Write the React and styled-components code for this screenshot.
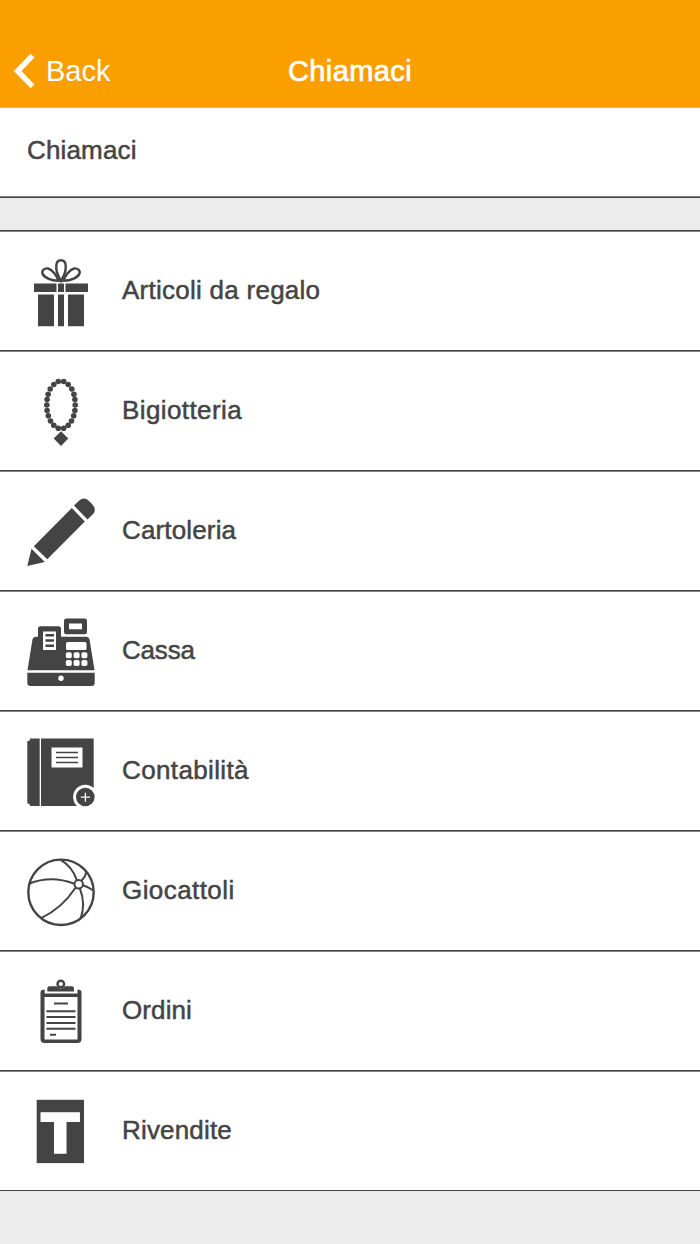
import React from 'react';
import styled, { createGlobalStyle } from 'styled-components';

const ink = '#444444';

const GlobalStyle = createGlobalStyle`
  * {
    box-sizing: border-box;
  }

  body {
    margin: 0;
    background-color: #ececec;
    font-family: "Liberation Sans", Arial, sans-serif;
    color: ${ink};
  }
`;

const Screen = styled.div`
  min-height: 1244px;
  background-color: #ececec;
`;

const NavBar = styled.header`
  display: grid;
  grid-template-columns: 1fr auto 1fr;
  align-items: center;
  height: 108px;
  padding: 35px 13px 0;
  background-color: #fb9e00;
  border-bottom: 1px solid #c3bba9;
  color: #ffffff;
`;

const BackButton = styled.button`
  display: flex;
  align-items: center;
  gap: 11px;
  padding: 0;
  background: none;
  border: none;
  color: inherit;
  font-family: inherit;
  font-size: 29px;
  line-height: 36px;
  cursor: pointer;
`;

const Title = styled.h1`
  margin: 0;
  font-size: 29px;
  font-weight: 400;
  line-height: 36px;
  letter-spacing: 0.4px;
  -webkit-text-stroke: 0.7px currentColor;
`;

const SectionHeader = styled.div`
  height: 90px;
  padding: 25px 27px;
  background-color: #ffffff;
  border-bottom: 1px solid ${ink};
  box-shadow: inset 0 -1px #858585;
`;

const Label = styled.span`
  margin-bottom: 2px;
  font-size: 26px;
  line-height: 34px;
  letter-spacing: ${props => props.$spacing || 0}px;
  -webkit-text-stroke: 0.5px currentColor;
`;

const List = styled.ul`
  margin: 32px 0 0;
  padding: 0;
  list-style: none;
  background-color: #ffffff;
  border-top: 1px solid ${ink};
`;

const Row = styled.li`
  display: flex;
  align-items: center;
  gap: 27px;
  height: 120px;
  padding: 0 27px;
  border-top: 1px solid #858585;
  border-bottom: 1px solid ${ink};
`;

const Icon = styled.svg`
  flex: none;
  width: 68px;
  height: 68px;
  margin-top: 2px;
  overflow: visible;
  fill: ${ink};
  stroke: none;
`;

function GiftIcon() {
  return (
    <Icon viewBox="0 0 68 68">
      <g fill="none" stroke={ink} strokeWidth="2.4">
        <path d="M34 23C31.500 19 28.800 12.500 29.300 7.500C29.600 4 31.500 2.200 34 2.200C36.500 2.200 38.400 4 38.700 7.500C39.200 12.500 36.500 19 34 23Z" />
        <path d="M31.500 22.800C30 18 25.500 11.500 21 10.500C17.500 9.800 14.500 12.500 15.500 15.500C16.800 19.500 24 22.500 31.500 22.800Z" />
        <path d="M36.500 22.800C38 18 42.500 11.500 47 10.500C50.500 9.800 53.500 12.500 52.500 15.500C51.200 19.500 44 22.500 36.500 22.800Z" />
      </g>
      <path d="M7 25.500H29.500V34H7ZM31 25.500H37V34H31ZM38.500 25.500H61V34H38.500Z" />
      <path d="M11 36.500H27V68.300H11ZM31 36.500H37V68.300H31ZM41 36.500H57V68.300H41Z" />
    </Icon>
  );
}

// x offset from the centre line and y of each pair of beads
const beads = [
  [2.7, 3.5], [7.2, 6.5], [10.8, 11], [12.9, 16.2], [13.9, 21.5], [14.2, 27],
  [13.9, 32.5], [12.7, 37.8], [10.5, 43], [7.2, 47.3], [2.7, 50.3],
];

function NecklaceIcon() {
  return (
    <Icon viewBox="0 0 68 68">
      {beads.map(([dx, y]) => (
        <React.Fragment key={y}>
          <circle cx={34 - dx} cy={y} r="2.8" />
          <circle cx={34 + dx} cy={y} r="2.8" />
        </React.Fragment>
      ))}
      <path d="M34 53.300L41.300 60.600L34 67.900L26.700 60.600Z" />
    </Icon>
  );
}

function PencilIcon() {
  return (
    <Icon viewBox="0 0 68 68">
      <path d="M47 7.500L52 2.700Q57 -1.700 62 3L65 6Q69.800 11 66.500 15.500L60.500 21.500Z" />
      <path d="M44.800 10L57.800 23.500L20.300 61.300L6.800 48.300Z" />
      <path d="M4.500 50.800L17.800 64L0.300 68Z" />
    </Icon>
  );
}

function RegisterIcon() {
  return (
    <Icon viewBox="0 0 68 68">
      <path
        fillRule="evenodd"
        d="M39.500 0.500H57.500Q60 0.500 60 3V13.700Q60 16.200 57.500 16.200H39.500Q37 16.200 37 13.700V3Q37 0.500 39.500 0.500ZM42 5.500V11.200H55V5.500Z"
      />
      <path d="M5.500 21.300Q6.200 18.800 8.500 18.800H11V10.800Q11 8.300 13.500 8.300H31.500Q34 8.300 34 10.800V18.800H59.500Q61.800 18.800 62.500 21.300L67.500 52.300H0.500Z" />
      <path d="M0.300 54.800H67.700V64.700Q67.700 68 64.500 68H3.500Q0.300 68 0.300 64.700Z" />
      <g fill="#ffffff">
        <rect x="16" y="13.500" width="13" height="18.500" />
        <rect x="39" y="24" width="20.500" height="8" rx="1.500" />
        {[38.8, 46.6, 54.4].map(x =>
          [34.3, 42].map(y => (
            <rect key={`${x}-${y}`} x={x} y={y} width="6" height="6" rx="1.800" />
          ))
        )}
        <circle cx="34" cy="60.200" r="2.700" />
      </g>
      <path d="M18.500 16H27V18.500H18.500ZM18.500 21.300H27V23.800H18.500ZM18.500 26.500H27V29H18.500Z" />
    </Icon>
  );
}

function LedgerIcon() {
  return (
    <Icon viewBox="0 0 68 68">
      <path d="M3 0.500H12.700V68H3V66.600L0.300 65.300V3.300L3 2.300Z" />
      <path d="M14 0.500H66.700V68H14Z" />
      <path fill="#ffffff" d="M24.500 9.500H55.500V29.500H24.500Z" />
      <path fill="none" stroke={ink} strokeWidth="1.300" d="M29 14.500H51M29 19.500H51M29 24.500H51" />
      <circle cx="58.300" cy="59" r="12.200" fill="#ffffff" />
      <circle cx="58.300" cy="59" r="9.300" />
      <path fill="none" stroke="#ffffff" strokeWidth="1.300" d="M53.800 59.200H63M58.400 54.700V63.700" />
    </Icon>
  );
}

function BallIcon() {
  return (
    <Icon viewBox="0 0 68 68">
      <g fill="none" stroke={ink} strokeWidth="2">
        <circle cx="34" cy="34.300" r="32.700" strokeWidth="2.400" />
        <circle cx="51.700" cy="26.300" r="4.200" />
        <path d="M33.500 1.800Q45 8 50 22.300M54.500 22.800Q58.500 18.800 59.500 13.800M56 27.300Q61 28.800 66 32.300M53 30.800Q59 46.300 53.500 60.800M48.500 29.800Q35 50.300 14.500 59.800M47.300 25.800Q24 16.800 2 25.800" />
      </g>
    </Icon>
  );
}

function ClipboardIcon() {
  return (
    <Icon viewBox="0 0 68 68">
      <circle cx="33.800" cy="6" r="3.300" fill="none" stroke={ink} strokeWidth="2.400" />
      <path d="M22.500 8.200H29.500Q34 13 38 8.200H45Q47 8.200 47 10.200V13.500H20.300V10.200Q20.300 8.200 22.500 8.200Z" />
      <path
        fillRule="evenodd"
        d="M14 13Q14 11.500 17.700 11.500V15.500H50.500V11.500Q54.500 11.500 54.500 14V60.700Q54.500 65 50.500 65H17.500Q13.500 65 13.500 60.700V14ZM17.500 19V61.500H50.500V19Z"
      />
      <path
        fill="none"
        stroke={ink}
        strokeWidth="1.900"
        d="M27 25.500H41M19.500 33.300H48.500M19.500 39H48.500M19.500 45H48.500M19.500 50.800H48.500M23 56.700H29"
      />
    </Icon>
  );
}

const SignLetter = styled.text`
  font-family: "Liberation Sans", Arial, sans-serif;
  font-size: 55px;
  font-weight: 700;
  fill: #ffffff;
  stroke: #ffffff;
  stroke-width: 3.4px;
  text-anchor: middle;
`;

function TobaccoSignIcon() {
  return (
    <Icon viewBox="0 0 68 68">
      <rect x="9.700" y="1.800" width="47.300" height="63.300" />
      <SignLetter transform="translate(33.300 53.500) scale(1.100 1)">T</SignLetter>
    </Icon>
  );
}

const categories = [
  { name: 'Articoli da regalo', icon: GiftIcon, spacing: 0.26 },
  { name: 'Bigiotteria', icon: NecklaceIcon, spacing: 0.4 },
  { name: 'Cartoleria', icon: PencilIcon, spacing: 0.15 },
  { name: 'Cassa', icon: RegisterIcon, spacing: -0.2 },
  { name: 'Contabilità', icon: LedgerIcon, spacing: 0.37 },
  { name: 'Giocattoli', icon: BallIcon, spacing: 0.42 },
  { name: 'Ordini', icon: ClipboardIcon, spacing: 0.1 },
  { name: 'Rivendite', icon: TobaccoSignIcon, spacing: 0.17 },
];

function App() {
  return (
    <Screen>
      <GlobalStyle />
      <NavBar>
        <BackButton>
          <svg width="22" height="36" viewBox="0 0 22 36" fill="none" stroke="#ffffff" strokeWidth="5.4">
            <path d="M19.500 2.700L4.600 18L19.500 33.300" />
          </svg>
          Back
        </BackButton>
        <Title>Chiamaci</Title>
      </NavBar>
      <SectionHeader>
        <Label $spacing={0.15}>Chiamaci</Label>
      </SectionHeader>
      <List>
        {categories.map(({ name, icon: CategoryIcon, spacing }) => (
          <Row key={name}>
            <CategoryIcon />
            <Label $spacing={spacing}>{name}</Label>
          </Row>
        ))}
      </List>
    </Screen>
  );
}

export default App;
